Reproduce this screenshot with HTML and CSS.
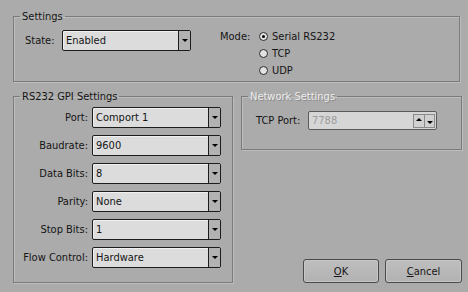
FILE: index.html
```html
<!DOCTYPE html>
<html>
<head>
<meta charset="utf-8">
<link rel="stylesheet" href="styles.css">
</head>
<body>
<div class="dialog">
  <fieldset class="group settings">
    <legend>Settings</legend>
    <div class="settings-body">
      <div class="state-row">
        <span class="state-label">State:</span>
        <div class="combo"><span class="val">Enabled</span><span class="drop"><i class="tri-down"></i></span></div>
      </div>
      <div class="mode">
        <span class="mode-label">Mode:</span>
        <div class="radios">
          <div class="radio-row"><span class="radio checked"></span><span>Serial RS232</span></div>
          <div class="radio-row"><span class="radio"></span><span>TCP</span></div>
          <div class="radio-row"><span class="radio"></span><span>UDP</span></div>
        </div>
      </div>
    </div>
  </fieldset>

  <div class="lower">
    <fieldset class="group rs232">
      <legend>RS232 GPI Settings</legend>
      <div class="form-grid">
        <span class="lbl">Port:</span>
        <div class="combo"><span class="val">Comport 1</span><span class="drop"><i class="tri-down"></i></span></div>
        <span class="lbl">Baudrate:</span>
        <div class="combo"><span class="val">9600</span><span class="drop"><i class="tri-down"></i></span></div>
        <span class="lbl">Data Bits:</span>
        <div class="combo"><span class="val">8</span><span class="drop"><i class="tri-down"></i></span></div>
        <span class="lbl">Parity:</span>
        <div class="combo"><span class="val">None</span><span class="drop"><i class="tri-down"></i></span></div>
        <span class="lbl">Stop Bits:</span>
        <div class="combo"><span class="val">1</span><span class="drop"><i class="tri-down"></i></span></div>
        <span class="lbl">Flow Control:</span>
        <div class="combo"><span class="val">Hardware</span><span class="drop"><i class="tri-down"></i></span></div>
      </div>
    </fieldset>

    <div class="right-col">
      <fieldset class="group network">
        <legend class="disabled-legend">Network Settings</legend>
        <div class="net-body">
          <span class="tcp-label">TCP Port:</span>
          <div class="spin">
            <span class="spin-val">7788</span>
            <span class="spin-btns">
              <span class="spin-btn up"><i class="tri-up"></i></span>
              <span class="spin-btn down"><i class="tri-down"></i></span>
            </span>
          </div>
        </div>
      </fieldset>
      <div class="buttons">
        <button class="btn ok"><u>O</u>K</button>
        <button class="btn cancel"><u>C</u>ancel</button>
      </div>
    </div>
  </div>
</div>
</body>
</html>
```

FILE: styles.css
```css
html, body {
  margin: 0;
  padding: 0;
}
body {
  width: 468px;
  height: 292px;
  overflow: hidden;
  background: #ababab;
  font-family: "DejaVu Sans Condensed", "DejaVu Sans", sans-serif;
  font-stretch: condensed;
  font-size: 11px;
  color: #151515;
}
.dialog {
  padding: 10px 0 0 13px;
  width: 449px;
}
.group {
  margin: 0;
  padding: 0;
  min-width: 0;
  border: 1px solid #7b7b7b;
  box-shadow: 1px 1px 0 #bdbdbd, inset 1px 1px 0 #bdbdbd;
}
.group legend {
  padding: 0 2px;
  margin-left: 6px;
  line-height: 13px;
  height: 13px;
}
.settings {
  width: 447px;
  box-sizing: border-box;
}
.settings-body {
  display: flex;
  align-items: flex-start;
  padding: 4px 0 2px 11px;
}
.state-row {
  display: flex;
  align-items: center;
  margin-top: 3px;
}
.state-label {
  width: 37px;
}
.combo {
  display: flex;
  box-sizing: border-box;
  width: 129px;
  height: 21px;
  border: 1px solid #1c1c1c;
  border-radius: 2px;
  background: #dcdcdc;
  box-shadow: inset 1px 1px 0 #f0f0f0;
}
.combo .val {
  flex: 1;
  padding-left: 3px;
  line-height: 19px;
}
.combo .drop {
  width: 11px;
  border-left: 1px solid #1c1c1c;
  background: #b2b2b2;
  display: flex;
  align-items: center;
  justify-content: center;
}
.tri-down {
  display: block;
  width: 0;
  height: 0;
  border-left: 3px solid transparent;
  border-right: 3px solid transparent;
  border-top: 3px solid #000;
}
.tri-up {
  display: block;
  width: 0;
  height: 0;
  border-left: 3px solid transparent;
  border-right: 3px solid transparent;
  border-bottom: 3px solid #000;
}
.mode {
  display: flex;
  margin-left: 29px;
  margin-top: 1px;
}
.mode-label {
  width: 39px;
  line-height: 17px;
}
.radio-row {
  display: flex;
  align-items: center;
  height: 17px;
}
.radio {
  box-sizing: border-box;
  width: 9px;
  height: 9px;
  border: 1px solid #2a2a2a;
  border-radius: 50%;
  background: #e2e2e2;
  margin-right: 4px;
  display: flex;
  align-items: center;
  justify-content: center;
}
.radio.checked::after {
  content: "";
  width: 3px;
  height: 3px;
  border-radius: 50%;
  background: #000;
}
.lower {
  display: grid;
  grid-template-columns: 220px 221px;
  column-gap: 8px;
  margin-top: 8px;
  height: 193px;
}
.rs232 {
  box-sizing: border-box;
}
.form-grid {
  display: grid;
  grid-template-columns: 1fr 129px;
  grid-auto-rows: 21px;
  row-gap: 7px;
  column-gap: 4px;
  align-items: center;
  padding: 4px 11px 14px 6px;
}
.lbl {
  text-align: right;
}
.right-col {
  display: flex;
  flex-direction: column;
  justify-content: space-between;
}
.network {
  box-sizing: border-box;
}
.disabled-legend {
  color: #ededed;
  text-shadow: 1px 1px 0 #8a8a8a;
}
.net-body {
  display: flex;
  align-items: center;
  padding: 8px 0 19px 14px;
}
.tcp-label {
  width: 52px;
}
.spin {
  display: flex;
  align-items: center;
  box-sizing: border-box;
  width: 129px;
  height: 19px;
  border: 1px solid #5a5a5a;
  border-radius: 2px;
  background: #d6d6d6;
}
.spin-val {
  flex: 1;
  padding-left: 3px;
  color: #9c9c9c;
}
.spin-btns {
  display: flex;
  margin-right: 1px;
}
.spin-btn {
  box-sizing: border-box;
  width: 11px;
  height: 14px;
  border: 1px solid #8a8a8a;
  background: #d0d0d0;
  display: flex;
  justify-content: center;
}
.spin-btn.up {
  align-items: flex-start;
  padding-top: 3px;
  border-right: none;
}
.spin-btn.down {
  align-items: flex-end;
  padding-bottom: 3px;
}
.buttons {
  display: flex;
  justify-content: flex-end;
  gap: 6px;
}
.btn {
  box-sizing: border-box;
  height: 24px;
  margin: 0;
  padding: 0;
  border: 1px solid #4a4a4a;
  border-radius: 3px;
  background: linear-gradient(#bebebe, #b2b2b2);
  box-shadow: inset 0 0 0 1px #c6c6c6;
  font-family: inherit;
  font-stretch: condensed;
  font-size: 11px;
  color: #151515;
}
.btn.ok {
  width: 76px;
}
.btn.cancel {
  width: 77px;
}
```
